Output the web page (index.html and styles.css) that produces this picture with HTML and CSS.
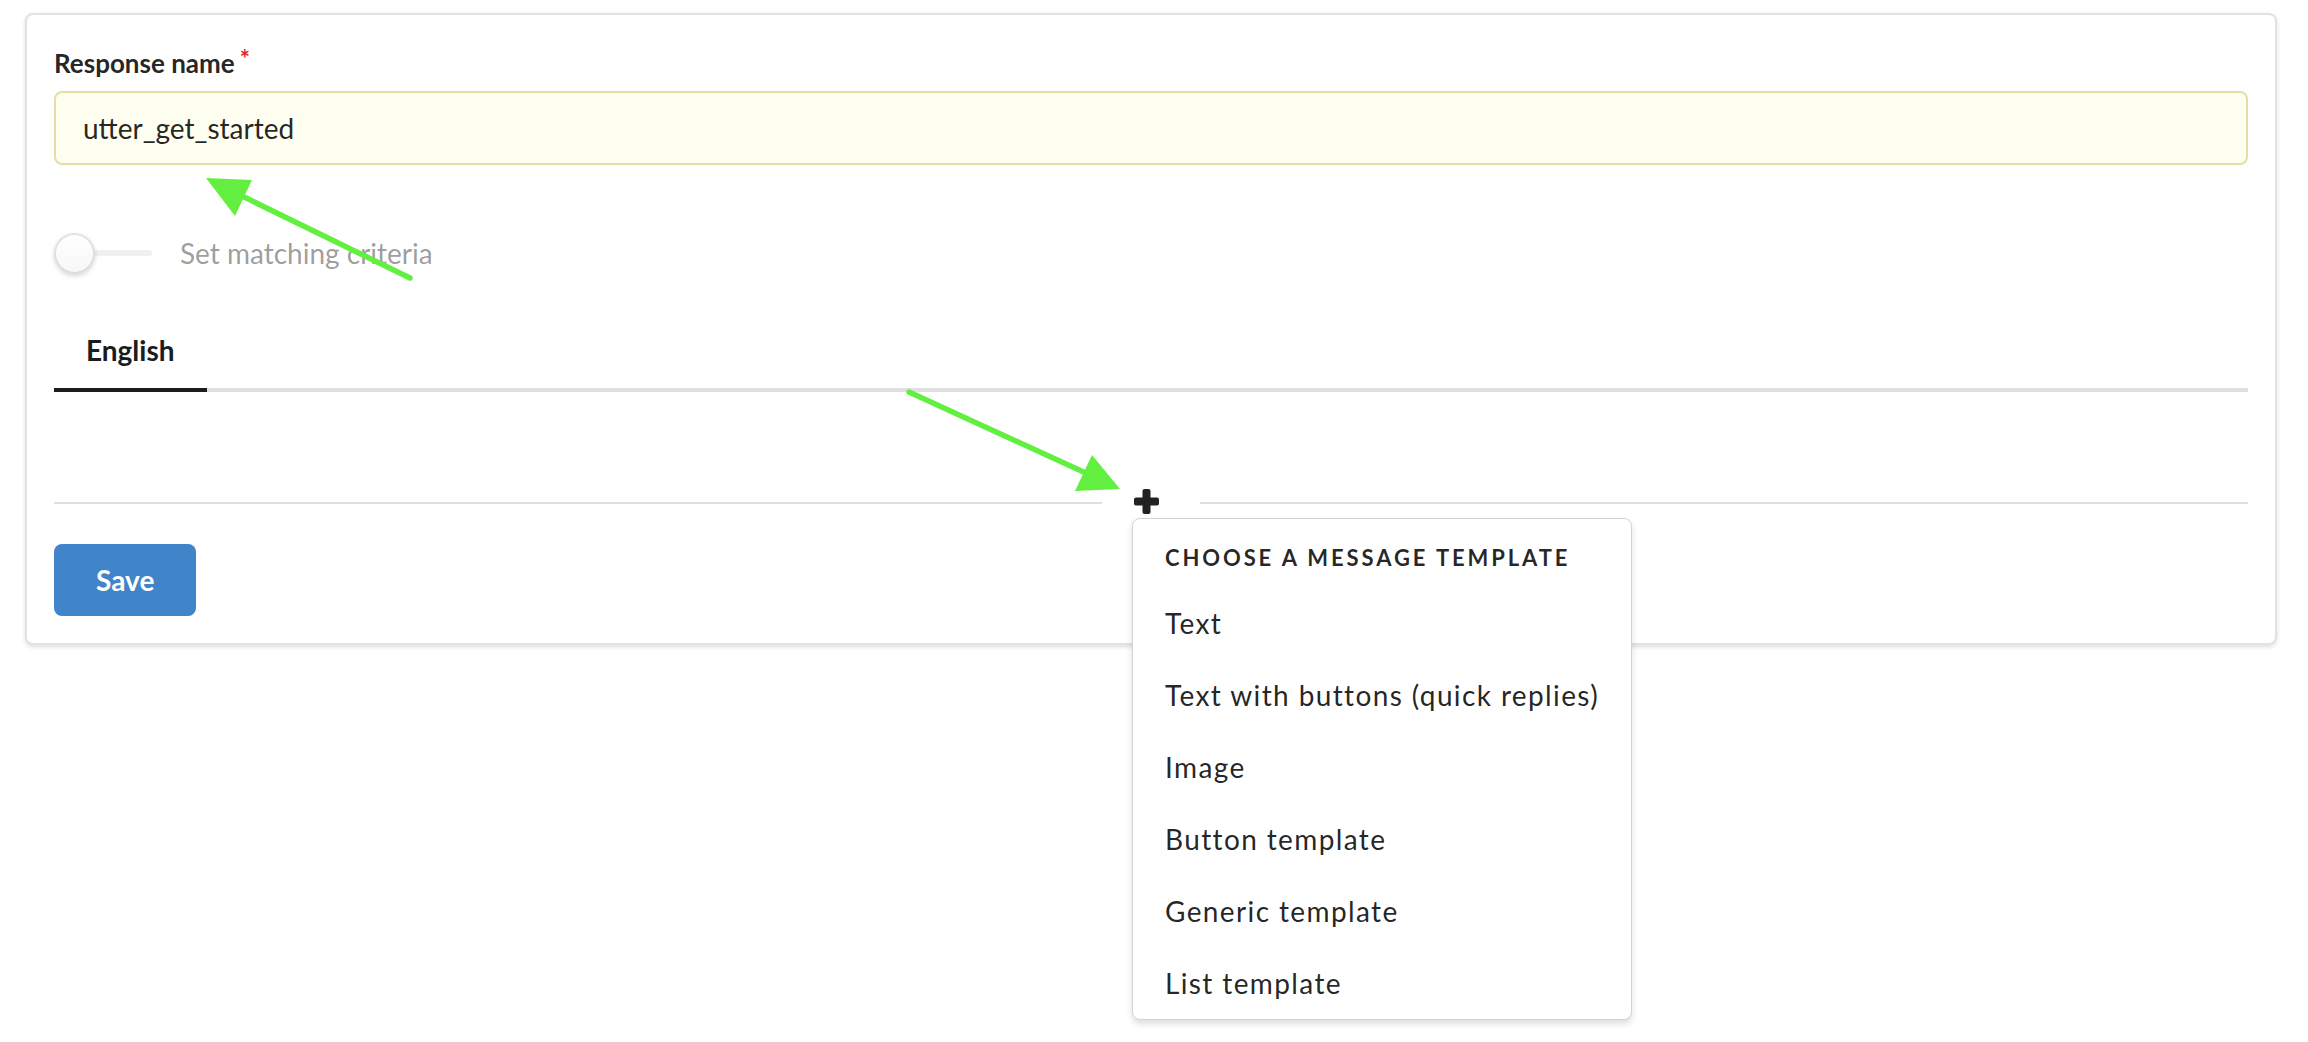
FILE: index.html
```html
<!DOCTYPE html>
<html lang="en">
<head>
<meta charset="utf-8">
<title>Response editor</title>
<link rel="stylesheet" href="styles.css">
</head>
<body>
<div class="page">
  <div class="card">
    <div class="field">
      <label class="label">Response name<span class="req">*</span></label>
      <div class="input">utter_get_started</div>
    </div>
    <div class="slider">
      <span class="switch"><span class="knob"></span></span>
      <span class="slider-label">Set matching criteria</span>
    </div>
    <div class="tabs">
      <div class="tab active">English</div>
    </div>
    <div class="tab-pane"></div>
    <div class="divider">
      <span class="line"></span>
      <div class="plus-wrap">
        <svg class="plus" width="25" height="25" viewBox="0 0 25 25" aria-hidden="true">
          <rect x="8.5" y="0" width="8" height="25" rx="2" fill="#222"/>
          <rect x="0" y="8.5" width="25" height="8" rx="2" fill="#222"/>
        </svg>
        <div class="menu">
          <div class="menu-header">Choose a message template</div>
          <div class="menu-item">Text</div>
          <div class="menu-item">Text with buttons (quick replies)</div>
          <div class="menu-item">Image</div>
          <div class="menu-item">Button template</div>
          <div class="menu-item">Generic template</div>
          <div class="menu-item">List template</div>
        </div>
      </div>
      <span class="line"></span>
    </div>
    <button class="save">Save</button>
  </div>
</div>
<svg class="annotations" width="2308" height="1042" viewBox="0 0 2308 1042" aria-hidden="true">
  <line x1="410" y1="278" x2="240" y2="195" stroke="#63ef3f" stroke-width="5.5" stroke-linecap="round"/>
  <polygon points="206,178 252,180 235,216" fill="#63ef3f"/>
  <line x1="909" y1="392" x2="1088" y2="474" stroke="#63ef3f" stroke-width="5.5" stroke-linecap="round"/>
  <polygon points="1120,489 1092,455 1075,491" fill="#63ef3f"/>
</svg>
</body>
</html>
```
FILE: styles.css
```css
* { box-sizing: border-box; }

html, body {
  margin: 0;
  background: #ffffff;
}

body {
  font-family: "Lato", "Open Sans", "Liberation Sans", sans-serif;
  color: rgba(0, 0, 0, 0.87);
  position: relative;
  min-height: 1042px;
}

.page {
  padding: 13px 31px 0 25px;
  min-height: 1042px;
}

.card {
  border: 2px solid #e2e2e3;
  border-radius: 8px;
  box-shadow: 0 2px 4px 0 rgba(34, 36, 38, 0.15);
  padding: 27px;
  background: #fff;
}

.label {
  display: block;
  font-size: 26px;
  font-weight: 700;
  line-height: 37px;
  height: 37px;
  margin-top: 3px;
  margin-bottom: 9px;
  color: rgba(0, 0, 0, 0.87);
}

.req {
  color: #db2828;
  margin-left: 5px;
  vertical-align: 0.22em;
  font-size: 24px;
  line-height: 0;
}

.input {
  height: 74px;
  border: 2px solid #e4dea4;
  background: #fefef1;
  border-radius: 8px;
  padding: 0 27px;
  display: flex;
  align-items: center;
  font-size: 28px;
  color: rgba(0, 0, 0, 0.87);
}

.slider {
  margin-top: 67px;
  height: 42px;
  display: flex;
  align-items: center;
}

.switch {
  position: relative;
  width: 98px;
  height: 42px;
  display: flex;
  align-items: center;
}

.switch::before {
  content: "";
  display: block;
  width: 98px;
  height: 6px;
  border-radius: 3px;
  background: #f0f0f0;
}

.knob {
  position: absolute;
  left: 0;
  top: 1px;
  width: 41px;
  height: 41px;
  border-radius: 50%;
  background: linear-gradient(#ffffff, #f7f7f7);
  box-shadow: 0 2px 4px 0 rgba(34, 36, 38, 0.18), inset 0 0 0 2px rgba(34, 36, 38, 0.13);
}

.slider-label {
  margin-left: 28px;
  font-size: 28px;
  color: rgba(0, 0, 0, 0.4);
}

.tabs {
  margin-top: 38px;
  display: flex;
  border-bottom: 4px solid #dfdfe1;
}

.tab {
  padding: 24px 32px;
  font-size: 28px;
  line-height: 28px;
  font-weight: 700;
  color: #1b1c1d;
  border-bottom: 4px solid transparent;
  margin-bottom: -4px;
}

.tab.active {
  border-bottom-color: #1b1c1d;
}

.tab-pane {
  height: 90px;
}

.divider {
  height: 42px;
  display: flex;
  align-items: center;
}

.line {
  flex: 1;
  height: 2px;
  background: #dfdfdf;
}

.plus-wrap {
  position: relative;
  width: 98px;
  height: 42px;
  display: flex;
  align-items: center;
}

.plus {
  display: block;
  margin-left: 32px;
  margin-bottom: 4px;
}

.menu {
  position: absolute;
  left: 30px;
  top: 36px;
  width: 500px;
  background: #fff;
  border: 1px solid #d4d4d5;
  border-radius: 8px;
  box-shadow: 0 4px 6px 0 rgba(34, 36, 38, 0.15);
  z-index: 5;
}

.menu-header {
  margin: 28px 0 18px;
  padding: 0 32px;
  font-size: 22px;
  line-height: 22px;
  font-weight: 700;
  text-transform: uppercase;
  letter-spacing: 2.9px;
  color: rgba(0, 0, 0, 0.85);
  white-space: nowrap;
}

.menu-item {
  padding: 22px 32px;
  font-size: 28px;
  line-height: 28px;
  letter-spacing: 1.38px;
  color: rgba(0, 0, 0, 0.87);
  white-space: nowrap;
}

.save {
  margin-top: 20px;
  display: block;
  height: 72px;
  padding: 0 42px;
  border: none;
  border-radius: 8px;
  background: #4084c9;
  color: #fff;
  font-family: "Lato", "Open Sans", "Liberation Sans", sans-serif;
  font-size: 28px;
  font-weight: 700;
}

.annotations {
  position: absolute;
  left: 0;
  top: 0;
  pointer-events: none;
  z-index: 10;
}
```
